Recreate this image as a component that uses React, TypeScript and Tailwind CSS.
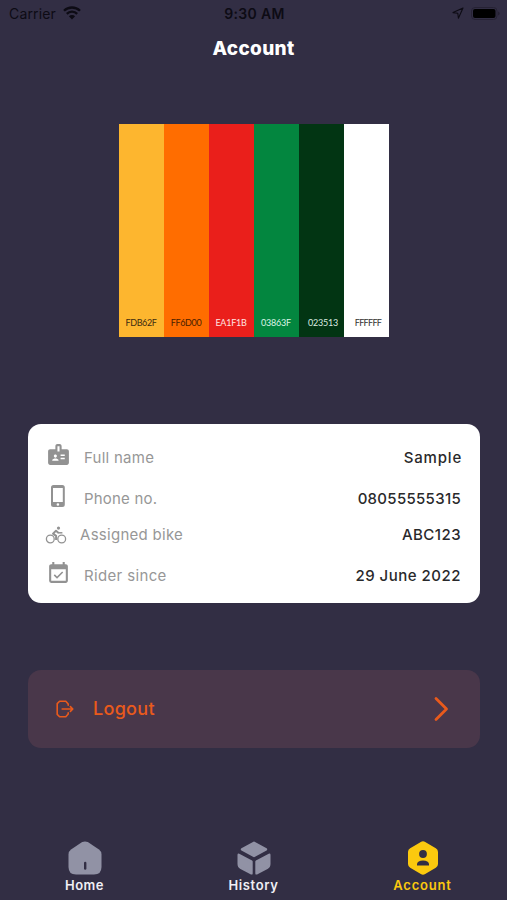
import React from 'react';
import { MdBadge, MdEventAvailable } from 'react-icons/md';

interface Swatch {
    code: string;
    bar: string;
    label: string;
}

interface DetailRow {
    label: string;
    value: string;
    icon: React.ReactNode;
    rowStyle: string;
    iconStyle: string;
    labelStyle: string;
    valueStyle: string;
}

const swatches: Swatch[] = [
    { code: 'FDB62F', bar: 'bg-[#fdb62f]', label: 'text-[#3c2b10] tracking-[-0.35px]' },
    { code: 'FF6D00', bar: 'bg-[#ff6d00]', label: 'text-[#4a2000] tracking-[-0.35px]' },
    { code: 'EA1F1B', bar: 'bg-[#ea1f1b]', label: 'text-[#ffe4e2] tracking-[-0.25px]' },
    { code: '03863F', bar: 'bg-[#03863f]', label: 'text-[#dcf5e6] tracking-[-0.2px]' },
    { code: '023513', bar: 'bg-[#023513]', label: 'text-[#dcebe0] pl-[4px] tracking-[-0.2px]' },
    { code: 'FFFFFF', bar: 'bg-white', label: 'text-[#333333] pl-[4px] tracking-[-0.7px]' },
];

const PhoneIcon = () => (
    <svg width="24" height="24" viewBox="0 0 24 24" fill="currentColor">
        <path
            fillRule="evenodd"
            d="M7.500 1h8.800q2.500 0 2.500 2.500v17q0 2.500-2.500 2.500H7.500Q5 23 5 20.500v-17Q5 1 7.500 1zM7 4v14h9.800V4zm4.900 15.200a1.300 1.300 0 1 0 0 2.600 1.300 1.300 0 0 0 0-2.600z"
        />
    </svg>
);

const BikeIcon = () => (
    <svg width="22" height="18" viewBox="0 0 22 18" fill="none" stroke="currentColor" strokeWidth="1.3">
        <circle cx="5.3" cy="13" r="3.9" />
        <circle cx="16.7" cy="13" r="3.9" />
        <circle cx="13.5" cy="2.1" r="1.6" fill="currentColor" stroke="none" />
        <path d="M13.6 6.9 11 4.700 8 7.600l3.100 2.300v4" strokeWidth="2" strokeLinejoin="round" />
        <path d="M13 6.800h4.400" strokeWidth="1.5" />
    </svg>
);

const details: DetailRow[] = [
    {
        label: 'Full name',
        value: 'Sample',
        icon: <MdBadge size={25} />,
        rowStyle: 'h-[41px]',
        iconStyle: 'w-9 ml-[18px] mb-[8px]',
        labelStyle: 'ml-0.5 tracking-[0.25px]',
        valueStyle: 'tracking-[0.8px] -mr-px',
    },
    {
        label: 'Phone no.',
        value: '08055555315',
        icon: <PhoneIcon />,
        rowStyle: 'h-10',
        iconStyle: 'w-9 ml-[18px] mb-[7px]',
        labelStyle: 'ml-0.5 tracking-[0.2px]',
        valueStyle: 'tracking-[0.3px]',
    },
    {
        label: 'Assigned bike',
        value: 'ABC123',
        icon: <BikeIcon />,
        rowStyle: 'h-[34px] pb-[2px]',
        iconStyle: 'w-[34px] ml-[17px] mb-[1px]',
        labelStyle: 'ml-px tracking-[0.28px]',
        valueStyle: 'tracking-[0.45px]',
    },
    {
        label: 'Rider since',
        value: '29 June 2022',
        icon: <MdEventAvailable size={25} />,
        rowStyle: 'h-12 pb-px',
        iconStyle: 'w-9 ml-[18px] mb-[6px]',
        labelStyle: 'ml-0.5 tracking-[0.35px]',
        valueStyle: 'tracking-[0.5px]',
    },
];

const StatusBar = () => (
    <div className="grid h-[26px] grid-cols-3 items-center pl-[9px] pr-[7px] text-[#0d0b14]">
        <div className="flex items-center gap-[7px] text-[14px] tracking-[0.15px]">
            <span>Carrier</span>
            <svg width="18" height="14" viewBox="0 0 18 14" fill="none" stroke="currentColor" strokeWidth="2.3">
                <path d="M1 4.8a11.3 11.3 0 0 1 16 0" />
                <path d="M3.8 7.9a7.3 7.3 0 0 1 10.4 0" />
                <path d="M9 13.5 5.9 10.3a4.4 4.4 0 0 1 6.2 0z" fill="currentColor" stroke="none" />
            </svg>
        </div>
        <div className="text-center text-[14px] font-semibold tracking-[0.3px]">9:30 AM</div>
        <div className="flex items-center justify-end gap-[7px]">
            <svg width="12" height="12" viewBox="0 0 12 12" fill="none" stroke="currentColor" strokeWidth="1.1" strokeLinejoin="round">
                <path d="M11 1 1 5.6l4.8.7.6 4.9z" />
            </svg>
            <svg width="29" height="13" viewBox="0 0 29 13">
                <rect x="0.5" y="0.5" width="25.5" height="12" rx="3.5" fill="none" stroke="#262234" />
                <rect x="2" y="2" width="22.5" height="9" rx="2" fill="#000" />
                <path d="M27.3 4.5v4q1.2-.6 1.2-2t-1.2-2z" fill="#211d2d" />
            </svg>
        </div>
    </div>
);

const LogoutIcon = () => (
    <svg width="18" height="18" viewBox="0 0 18 18" fill="none" stroke="currentColor" strokeWidth="1.6" strokeLinecap="round" strokeLinejoin="round">
        <path d="M12.2 5.200V4L9.800 1.200H3.600L1.200 3.600v10.800l2.400 2.400h6.200l2.400-2.800v-1.200" />
        <path d="M6.200 9H16.500M14.400 6.600 16.800 9l-2.400 2.400" />
    </svg>
);

const HomeIcon = () => (
    <svg width="34" height="34" viewBox="0 0 34 34">
        <path d="M14.2 1.1q2.8-1.4 5.6 0L31 8.400q2.500 1.800 2.500 5V26q0 7.500-7.500 7.500H8Q.5 33.500.5 26V13.400q0-3.200 2.500-5z" fill="#9192a5" />
        <path d="M17.200 22v5.500" stroke="#322e44" strokeWidth="2.400" strokeLinecap="round" />
    </svg>
);

const HistoryIcon = () => (
    <svg width="34" height="34" viewBox="0 0 34 34" fill="#9192a5" stroke="#9192a5" strokeWidth="2.4" strokeLinejoin="round">
        <path d="M17 1.700 29 8.400 17 15 5 8.400z" />
        <path d="M1.700 13.800 14.500 20.600v11.800L4 27q-2.300-1.300-2.300-4z" />
        <path d="M32.300 13.800 19.500 20.600v11.800L30 27q2.300-1.300 2.300-4z" />
    </svg>
);

const AccountIcon = () => (
    <svg width="34" height="34" viewBox="0 0 34 34">
        <path d="M14.800 1q2.200-1.300 4.400 0l10.600 6.200q2.200 1.300 2.200 3.800v12q0 2.500-2.200 3.800L19.200 33q-2.200 1.300-4.400 0L4.200 26.800Q2 25.500 2 23V11q0-2.500 2.200-3.800z" fill="#fbc90e" />
        <circle cx="17" cy="13" r="3.900" fill="#322e44" />
        <path d="M11 24.500v-1.500q.5-3.500 6-3.500t6 3.500v1.500z" fill="#322e44" />
    </svg>
);

const tabs = [
    { name: 'Home', icon: <HomeIcon />, style: 'text-[#f0eff5] tracking-[0.5px]' },
    { name: 'History', icon: <HistoryIcon />, style: 'text-[#f0eff5] tracking-[0.6px]' },
    { name: 'Account', icon: <AccountIcon />, style: 'text-[#fbc90e] tracking-[0.8px]' },
];

const App: React.FC = () => {
    return (
        <div className="flex h-[900px] w-[507px] flex-col overflow-hidden bg-[#322e44] font-['Inter',sans-serif]">
            <StatusBar />

            <h1 className="mt-[9px] text-center text-[19px] leading-7 font-extrabold tracking-[0.35px] text-white">Account</h1>

            {/* Profile picture */}
            <div className="mx-auto mt-[61px] flex h-[213px] w-[270px]">
                {swatches.map((swatch) => (
                    <div key={swatch.code} className={`flex flex-1 items-end justify-center pb-[8px] ${swatch.bar}`}>
                        <span className={`font-['Lato',sans-serif] text-[9px] leading-3 ${swatch.label}`}>{swatch.code}</span>
                    </div>
                ))}
            </div>

            {/* Rider details */}
            <div className="mr-[27px] ml-7 mt-[87px] h-[179px] rounded-[13px] bg-white pt-[14px] pr-[19px]">
                {details.map((row) => (
                    <div key={row.label} className={`flex items-center text-[15px] ${row.rowStyle}`}>
                        <span className={`text-[#929292] ${row.iconStyle}`}>{row.icon}</span>
                        <span className={`text-[#979797] ${row.labelStyle}`}>{row.label}</span>
                        <span className={`ml-auto font-medium text-[#29292b] ${row.valueStyle}`}>{row.value}</span>
                    </div>
                ))}
            </div>

            {/* Logout */}
            <button className="mr-[27px] ml-7 mt-[67px] flex h-[78px] items-center rounded-[13px] bg-[#49374a] pr-[31px] pb-px pl-7 text-[#e95a1c]">
                <LogoutIcon />
                <span className="ml-[19px] text-[18px] font-medium tracking-[0.3px]">Logout</span>
                <svg className="ml-auto" width="16" height="26" viewBox="0 0 16 26" fill="none" stroke="currentColor" strokeWidth="2.8" strokeLinecap="round" strokeLinejoin="round">
                    <path d="m3 2.500 10.500 10.500L3 23.500" />
                </svg>
            </button>

            {/* Tab bar */}
            <nav className="mt-auto grid h-[59px] grid-cols-3">
                {tabs.map((tab) => (
                    <div key={tab.name} className="flex flex-col items-center">
                        {tab.icon}
                        <span className={`text-[13px] leading-5 font-semibold ${tab.style}`}>{tab.name}</span>
                    </div>
                ))}
            </nav>
        </div>
    );
};

export default App;
